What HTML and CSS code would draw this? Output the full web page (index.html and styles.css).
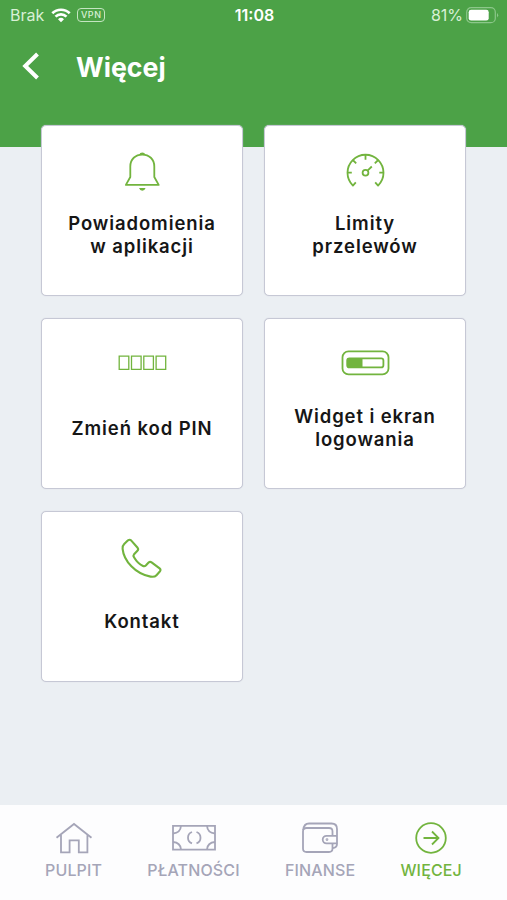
FILE: index.html
```
<!DOCTYPE html>
<html lang="pl">
<head>
    <meta charset="UTF-8">
    <meta name="viewport" content="width=device-width, initial-scale=1.0">
    <title>Więcej</title>
    <link rel="stylesheet" href="styles.css">
</head>
<body>
    <header class="header">
        <div class="status">
            <div class="status__left">
                <span class="status__carrier">Brak</span>
                <svg class="status__wifi" width="20" height="15" viewBox="0 0 20 15">
                    <path d="M1.3 5.3a12.4 12.4 0 0 1 17.4 0M4.5 8.6a7.8 7.8 0 0 1 11 0" fill="none" stroke="#fff" stroke-width="2.7"/>
                    <path d="M10 14.3l-3-3a4.3 4.3 0 0 1 6 0z" fill="#fff"/>
                </svg>
                <span class="status__vpn">VPN</span>
            </div>
            <span class="status__time">11:08</span>
            <div class="status__right">
                <span class="status__percent">81%</span>
                <svg width="33" height="17" viewBox="0 0 33 17">
                    <rect x=".7" y=".7" width="28.6" height="15" rx="4.5" fill="none" stroke="#8cc78a" stroke-width="1.2"/>
                    <rect x="2.7" y="2.8" width="20" height="10.8" rx="2.4" fill="#fff"/>
                    <path d="M31 6q2.4 2.2 0 4.4z" fill="#8cc78a"/>
                </svg>
            </div>
        </div>
        <div class="header__bar">
            <button class="header__back" aria-label="Wstecz">
                <svg width="18" height="28" viewBox="0 0 18 28">
                    <path d="M16.5 2L4.2 14l12.3 12" fill="none" stroke="#fff" stroke-width="4"/>
                </svg>
            </button>
            <h1 class="header__title">Więcej</h1>
        </div>
    </header>

    <main class="tiles">
        <a class="tile">
            <svg class="tile__icon" viewBox="0 0 50 50">
                <path d="M13.3 20.5C13.3 13 18.5 8.6 25.3 8.6S37.3 13 37.3 20.5V31l4.4 7.9H8.9L13.3 31z"/>
                <path class="solid" d="M22.2 8.8a3.2 3.2 0 0 1 6.2 0zM22 42h6.6q-1 2.8-3.3 2.8T22 42z"/>
            </svg>
            <span class="tile__label">Powiadomienia<br>w aplikacji</span>
        </a>
        <a class="tile">
            <svg class="tile__icon" viewBox="0 0 50 50">
                <path d="M15.8 36.3L12.9 39.6A18 18 0 1 1 38.1 39.6L35.2 36.3"/>
                <path d="M7.5 26.7h4.3M39.3 26.7h4.3M25.5 8.7v5M12.8 14l3.4 3.4M38.2 14l-3.4 3.4M27.8 24.4l4-3.9"/>
                <circle cx="25.5" cy="26.7" r="2.9"/>
            </svg>
            <span class="tile__label">Limity<br>przelewów</span>
        </a>
        <a class="tile">
            <svg class="tile__icon tile__icon--thin" viewBox="0 0 50 50">
                <path d="M2.2 17.2h9.6v13.2H2.2zM14.5 17.2h9.6v13.2h-9.6zM26.8 17.2h9.6v13.2h-9.6zM39.1 17.2h9.6v13.2h-9.6z"/>
            </svg>
            <span class="tile__label">Zmień kod PIN</span>
        </a>
        <a class="tile">
            <svg class="tile__icon" viewBox="0 0 50 50">
                <rect x="2.5" y="12.3" width="46" height="23.1" rx="6"/>
                <rect x="7.2" y="19.3" width="36.2" height="9.1" rx="2.2"/>
                <path class="solid" d="M9 19h13.5v9.7H9q-2 0-2-2V21q0-2 2-2z"/>
            </svg>
            <span class="tile__label">Widget i ekran<br>logowania</span>
        </a>
        <a class="tile">
            <svg class="tile__icon tile__icon--bold" viewBox="0 0 50 50">
                <path d="M11 8.3Q12.7 7 14.3 8.6L20.6 15.8Q21.8 17.3 20.4 18.8L17.1 22.2Q16 23.6 17 25.2Q20.8 31.6 26 34Q27.6 34.7 28.8 33.5L31.6 30.5Q33 29.2 34.6 30.3L42.6 36.4Q44.3 37.8 42.8 39.5L39.5 43.2Q37.6 45.3 33.5 44.6C18.5 41.8 6.8 29 5.6 16.8Q5.3 14 7.2 12.1z"/>
            </svg>
            <span class="tile__label">Kontakt</span>
        </a>
    </main>

    <nav class="nav">
        <a class="nav__item">
            <svg class="nav__icon" width="44" height="34" viewBox="0 0 44 34">
                <path d="M4.5 16.7L22 3l17.5 13.7M9 14v17.4h8.6V19.3h9.2v12.1h8.6V14"/>
            </svg>
            <span class="nav__label">PULPIT</span>
        </a>
        <a class="nav__item">
            <svg class="nav__icon" width="44" height="34" viewBox="0 0 44 34">
                <path d="M1 4.8h42v23.8H1z"/>
                <path d="M1 12.5q7.5-.5 8-7.7M43 12.5q-7.5-.5-8-7.7M1 21q7.5.5 8 7.6M43 21q-7.5.5-8 7.6M20 11q-4 1.5-4 5.7t4 5.7M24.5 11q4 1.5 4 5.7t-4 5.7"/>
            </svg>
            <span class="nav__label">PŁATNOŚCI</span>
        </a>
        <a class="nav__item">
            <svg class="nav__icon" width="44" height="34" viewBox="0 0 44 34">
                <path d="M34.5 14.5v-4Q34.5 7 31 7H8.500Q5 7 5 10.5v17Q5 31 8.500 31H31q3.500 0 3.500-3.500v-5"/>
                <path d="M5.300 9Q5.800 2.500 11 2.500h22.500Q39 2.500 39 8v15q0 3.500-4.500 4.200M39 14.800H28.500a3.800 3.800 0 0 0 0 7.600H39"/>
                <circle cx="29" cy="18.600" r=".5"/>
            </svg>
            <span class="nav__label">FINANSE</span>
        </a>
        <a class="nav__item is-active">
            <svg class="nav__icon" width="44" height="34" viewBox="0 0 44 34">
                <circle cx="22" cy="17" r="14.800"/>
                <path d="M14.500 17h15M23 10.500l6.500 6.500-6.500 6.500"/>
            </svg>
            <span class="nav__label">WIĘCEJ</span>
        </a>
    </nav>
</body>
</html>
```

FILE: styles.css
```
* { box-sizing: border-box; }
body, html { height: 100%; }
body { display: flex; flex-direction: column; margin: 0; background: #ebeff3; font-family: Inter, "Liberation Sans", sans-serif; }

.header { height: 147px; background: #4ca247; color: #fff; flex: none; }
.status { display: grid; grid-template-columns: 1fr auto 1fr; align-items: center; height: 30px; padding: 0 8px 0 10px; font-size: 16px; line-height: 20px; }
.status__left, .status__right { display: flex; align-items: center; }
.status__right { justify-content: flex-end; gap: 3px; }
.status__carrier, .status__percent { color: #d8f0d6; }
.status__wifi { margin: 0 6px 0 7px; }
.status__vpn { width: 28px; height: 14px; border: 1px solid #c4e5c1; border-radius: 4px; color: #d8f0d6; font-size: 9px; font-weight: 500; letter-spacing: .6px; line-height: 12px; text-align: center; }
.status__time { font-weight: 600; }
.header__bar { display: flex; align-items: center; height: 72px; padding-left: 21px; }
.header__back { display: flex; padding: 0; border: 0; background: none; }
.header__title { margin: 1px 0 0 37px; font-size: 26.7px; font-weight: 700; line-height: 34px; }

.tiles { display: grid; grid-template-columns: 202px 202px; grid-auto-rows: 171px; gap: 22px 21px; flex: 1; align-content: start; margin-top: -22px; padding-left: 41px; }
.tile { display: flex; flex-direction: column; align-items: center; padding-top: 20px; border: 1px solid #c6c8d5; border-radius: 5px; background: #fff; box-shadow: 0 0 1px #c6c8d5; }
.tile__icon { width: 50px; height: 50px; flex: none; fill: none; stroke: #72b43e; stroke-width: 1.8; stroke-linejoin: round; }
.tile__icon--thin { stroke-width: 1.3; stroke-linejoin: miter; }
.tile__icon--bold { stroke-width: 2.1; }
.tile__icon .solid { fill: #72b43e; stroke: none; }
.tile__label { display: flex; align-items: center; height: 78px; color: #161616; font-size: 18.5px; font-weight: 600; letter-spacing: .9px; line-height: 23px; text-align: center; }

.nav { display: flex; justify-content: space-between; height: 95px; padding: 16px 45px 0; background: #fdfdfe; flex: none; }
.nav__item { display: flex; flex-direction: column; align-items: center; color: #a5a5b8; }
.nav__icon { fill: none; stroke: currentColor; stroke-width: 1.8; }
.nav__label { margin-top: 5px; font-size: 16px; font-weight: 500; letter-spacing: .15px; line-height: 20px; }
.is-active { color: #72b43e; }
```
